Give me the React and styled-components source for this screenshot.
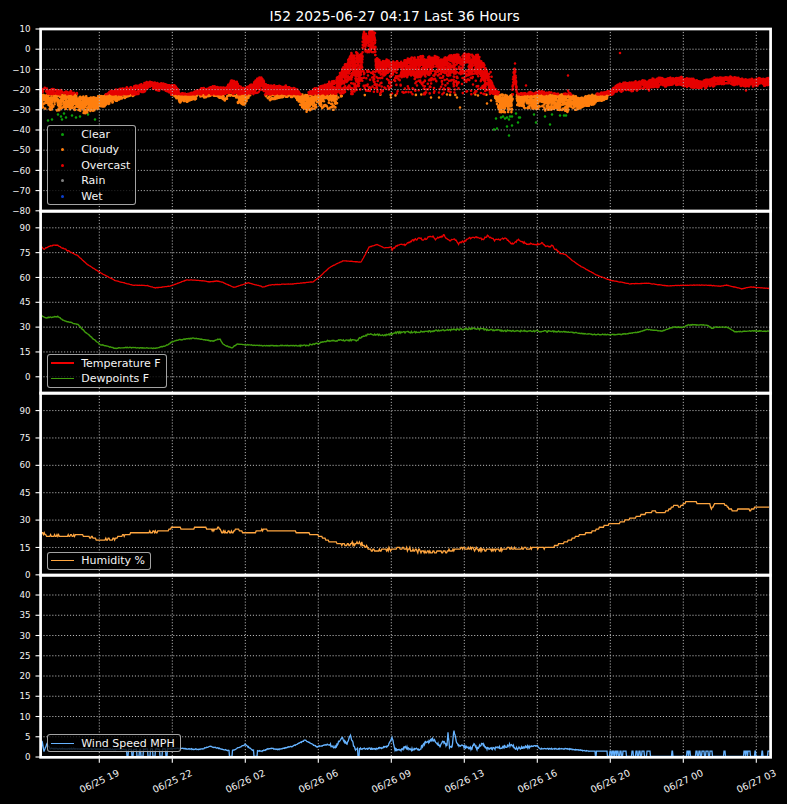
import React from 'react'
import styled, { createGlobalStyle } from 'styled-components'

const FONT = '"DejaVu Sans", "Liberation Sans", sans-serif'
const ROW_H = 182.33
const GRID_X = [99.3, 172.3, 245.3, 318.3, 391.3, 464.3, 537.3, 610.3, 683.3, 756.3]
const X_LABELS = ['06/25 19', '06/25 22', '06/26 02', '06/26 06', '06/26 09', '06/26 13', '06/26 16', '06/26 20', '06/27 00', '06/27 03']

const GlobalStyle = createGlobalStyle`
  html, body {
    margin: 0;
    background: #000;
  }
`

const Figure = styled.div`
  width: 787px;
  height: 804px;
  background: #000;
  color: #fff;
  font-family: ${FONT};
  display: flex;
  flex-direction: column;
  overflow: hidden;
`

const Title = styled.h1`
  margin: 0;
  height: 28.5px;
  padding-left: 2px;
  box-sizing: border-box;
  font-size: 13.8px;
  font-weight: 400;
  line-height: 33px;
  text-align: center;
  white-space: nowrap;
`

const PanelRow = styled.section`
  display: flex;
  height: ${ROW_H}px;
  flex: none;
`

const Gutter = styled.svg`
  display: block;
  width: 40px;
  height: 100%;
  flex: none;
  overflow: visible;
`

const PlotArea = styled.div`
  position: relative;
  width: 732px;
  height: 100%;
  flex: none;
`

const PlotSvg = styled.svg`
  display: block;
  width: 100%;
  height: 100%;
  overflow: visible;
`

const TickText = styled.text`
  font-family: ${FONT};
  font-size: ${(p) => p.$size}px;
  fill: #f2f2f2;
`

const XAxis = styled.svg`
  display: block;
  width: 787px;
  height: 46px;
  flex: none;
  overflow: visible;
`

const Legend = styled.div`
  position: absolute;
  left: 6.7px;
  bottom: 5.4px;
  box-sizing: border-box;
  display: flex;
  flex-direction: column;
  padding: 0.5px 5px 0.5px 3px;
  background: rgba(0, 0, 0, 0.8);
  border: 1px solid rgba(204, 204, 204, 0.8);
  border-radius: 3px;
`

const LegendRow = styled.div`
  display: flex;
  align-items: center;
  gap: 7.5px;
  height: 15.5px;
  font-size: 11px;
  color: #f4f4f4;
  white-space: nowrap;
`

const Swatch = styled.span`
  display: flex;
  align-items: center;
  justify-content: center;
  width: 23px;
  flex: none;
`

const LineKey = styled.span`
  display: block;
  width: 100%;
  height: 1.2px;
  background: ${(p) => p.$color};
`

const DotKey = styled.span`
  display: block;
  width: 3px;
  height: 3px;
  border-radius: 50%;
  background: ${(p) => p.$color};
`

// small seeded random so the noisy traces come out the same each load
function makeRng(seed) {
  let a = seed
  return () => {
    a = (a + 0x6d2b79f5) | 0
    let t = Math.imul(a ^ (a >>> 15), 1 | a)
    t = (t + Math.imul(t ^ (t >>> 7), 61 | t)) ^ t
    return ((t ^ (t >>> 14)) >>> 0) / 4294967296
  }
}

function interp(pts, x, col = 1) {
  if (x <= pts[0][0]) return pts[0][col]
  for (let i = 1; i < pts.length; i++) {
    if (x <= pts[i][0]) {
      const [x0] = pts[i - 1]
      const [x1] = pts[i]
      const f = (x - x0) / (x1 - x0)
      return pts[i - 1][col] + (pts[i][col] - pts[i - 1][col]) * f
    }
  }
  return pts[pts.length - 1][col]
}

function tracePath(pts, seed, noiseAt, quant) {
  const rng = makeRng(seed)
  let d = ''
  for (let x = 41; x <= 769.5; x += 0.8) {
    let y = interp(pts, x) + (rng() - 0.5) * noiseAt(x)
    if (quant) y = Math.round(y / quant) * quant
    d += `${d ? 'L' : 'M'}${x.toFixed(1)} ${y.toFixed(2)}`
  }
  return d
}

const TEMP = [[41, 246], [44, 249], [50, 245.7], [57, 245], [63, 248], [78, 255.7], [87, 264], [100, 272.3], [115, 280.3], [133, 285], [147, 285.3], [155, 287.7], [170, 286], [187, 279.7], [200, 280.3], [210, 281.7], [217, 280.7], [223, 282.3], [234, 287.3], [248, 282.7], [260, 285.7], [263, 287], [270, 284.7], [293, 283.7], [313, 281.7], [318, 278], [330, 267], [343, 260.7], [350, 261], [361, 262], [364, 256.7], [369, 247], [377, 244.3], [384, 247.7], [391, 247], [392, 249.7], [397, 245.7], [405, 244.3], [413, 240], [420, 238.3], [423, 239.7], [432, 235.7], [435, 239], [444, 235], [448, 240.3], [455, 239], [458, 243.7], [467, 240], [472, 236.7], [483, 239], [488, 235.7], [495, 240], [505, 238.3], [513, 244.3], [518, 239.7], [527, 243.7], [537, 244.3], [542, 243], [546, 246.7], [552, 245.7], [560, 253.3], [565, 254], [572, 260], [580, 265.7], [597, 275], [610, 280], [630, 283.7], [647, 283], [667, 285.7], [687, 285], [707, 285], [720, 286], [727, 285], [742, 288.7], [750, 286.7], [769, 288.3]]

const DEW = [[41, 315], [45, 317.7], [58, 316.3], [63, 320], [78, 324.3], [85, 331.7], [100, 344.3], [115, 348], [127, 347.3], [147, 348], [157, 348], [167, 345], [172, 341.7], [177, 340], [193, 338], [203, 339.3], [213, 341], [217, 339.3], [220, 339], [223, 344.3], [232, 347.7], [237, 344], [260, 345.5], [303, 345.5], [318, 343.3], [327, 340.7], [350, 340], [357, 340], [363, 335.7], [370, 334], [387, 335], [397, 332.3], [420, 331.7], [447, 330], [473, 328.3], [490, 329.7], [513, 331], [528, 330.7], [567, 331.7], [593, 334.3], [620, 334.3], [637, 332.3], [647, 329.3], [662, 331], [673, 327], [683, 327], [688, 324.7], [707, 324.7], [712, 328.3], [715, 327], [727, 327], [735, 331.7], [753, 330.7], [769, 331]]

const HUMIDITY = [[41, 532.7], [48, 536], [67, 536], [82, 534.7], [83, 536.7], [92, 537.7], [98, 540.3], [112, 539.7], [120, 536.7], [133, 533], [147, 533], [155, 531.7], [168, 530.7], [172, 527.3], [178, 527.3], [182, 529.3], [193, 529], [195, 527.3], [205, 527.3], [210, 529.7], [215, 530], [219, 527.3], [222, 532.3], [233, 532.3], [237, 528.7], [243, 532.3], [255, 532.3], [265, 529.3], [268, 530.7], [290, 531], [302, 532.7], [317, 534.7], [328, 540.7], [337, 543.3], [343, 545], [362, 543.3], [367, 548.3], [373, 550.3], [387, 550], [399, 548], [420, 551], [430, 552], [445, 551.7], [460, 548.3], [487, 550], [507, 549], [544, 548], [554, 546.7], [567, 541.7], [580, 535], [590, 532.7], [600, 528], [610, 524], [619, 523.3], [630, 519.3], [644, 514.3], [652, 511.7], [664, 512.7], [674, 506], [680, 506.7], [686, 502.3], [695, 502], [697, 503.7], [710, 504], [711, 509], [715, 504], [724, 504], [732, 510.7], [737, 510.7], [739, 509], [749, 509], [750, 510.7], [757, 506.7], [769, 506.7]]

const WIND = [[41, 756], [42, 741], [44, 752], [47, 744], [50, 749], [90, 749.5], [125, 750], [181, 749], [200, 750], [210, 747], [220, 749], [228, 751], [235, 750], [245, 745], [253, 751], [262, 751.7], [270, 748.7], [278, 750], [293, 746.7], [305, 740.7], [317, 747.3], [328, 745], [335, 748], [342, 738], [347, 746], [350, 735.7], [355, 749.3], [377, 749.3], [388, 746.7], [392, 737.7], [395, 750], [400, 750.7], [405, 747.7], [410, 750], [420, 749.3], [425, 743.3], [433, 740], [440, 746.7], [443, 741.7], [447, 746], [448, 731.7], [449.5, 748], [452, 748], [454, 730.7], [457, 745], [463, 746.7], [472, 749.3], [474, 743.3], [477, 749.3], [482, 744], [487, 749.3], [500, 748.3], [512, 745], [515, 749.3], [537, 746], [540, 749.3], [567, 749.3], [590, 751.7]]
const WIND_DROPS = [[127, 128], [132, 133], [137, 139], [141, 143], [148, 150], [153, 155], [160, 162], [166, 167], [229.5, 232], [254, 257], [358, 359]]
const WIND_RIGHT = [[540, 595], [596.5, 607], [610, 611], [612.5, 613.5], [615, 616], [617, 618], [620, 621], [623, 626], [632, 633], [636, 637], [639, 640], [642, 644], [647, 650], [672, 672.7], [687, 688], [689, 690], [696, 697], [699, 700], [702, 704], [706, 708], [710, 712], [724, 725], [744, 745], [746, 747], [748, 750], [755, 755.7], [762, 762.7], [768, 769.5]]

function windPath() {
  const rng = makeRng(91)
  const inside = (list, x) => list.some(([a, b]) => x >= a && x <= b)
  const jitter = (x) => {
    if (x > 330 && x < 356) return 3.2
    if (x > 396 && x < 530) return 2.6
    if (x > 360 && x < 396) return 1.6
    return 0.9
  }
  let d = ''
  for (let x = 41; x <= 769.5; x += 0.5) {
    let y
    if (x >= 590) y = inside(WIND_RIGHT, x) ? 751.7 : 757
    else if (inside(WIND_DROPS, x)) y = 757
    else y = interp(WIND, x) + (rng() - 0.5) * jitter(x)
    d += `${d ? 'L' : 'M'}${x} ${y.toFixed(1)}`
  }
  return d
}

// x, top of the band, bottom of the band (pixels)
const BAND = [[41, 87, 107], [55, 88, 111], [70, 90, 109], [85, 96, 113], [100, 96, 108], [110, 91, 103], [125, 87, 97], [140, 84, 92], [150, 81, 88], [165, 83, 89], [175, 85, 96], [180, 92, 102], [190, 93, 100], [200, 88, 96], [215, 86, 95], [225, 87, 100], [232, 79, 94], [236, 80, 100], [240, 85, 105], [245, 87, 104], [250, 84, 95], [258, 78, 92], [262, 76, 89], [266, 84, 96], [270, 85, 100], [280, 85, 97], [295, 87, 96], [305, 94, 112], [318, 85, 107], [335, 80, 110], [340, 70, 92], [345, 62, 92], [352, 50, 88], [358, 50, 85], [362, 50, 78], [363, 30, 52], [375, 29, 52], [376, 55, 66], [380, 58, 72], [395, 60, 75], [420, 55, 74], [440, 55, 72], [455, 54, 72], [470, 52, 74], [480, 55, 72], [485, 65, 85], [490, 78, 92], [495, 88, 100], [500, 93, 112], [510, 95, 113], [512, 93, 112], [513.5, 70, 84], [515, 62, 84], [516, 75, 88], [517, 92, 108], [530, 92, 108], [545, 90, 110], [560, 93, 110], [570, 92, 112], [580, 97, 108], [590, 95, 105], [600, 92, 100], [610, 90, 96], [620, 83, 90], [630, 82, 90], [640, 80, 88], [660, 78, 85], [680, 76, 84], [700, 80, 87], [710, 78, 85], [730, 76, 83], [745, 79, 86], [769, 77, 83]]

const GREEN_DOTS = [[48, 120], [52, 119], [58, 114], [61, 116], [62, 119], [64, 113], [66, 117], [72, 115], [76, 117], [80, 116], [88, 114], [95, 119], [494, 129], [497, 128], [496, 118], [501, 117], [503, 116], [505, 118], [507, 117], [509, 119], [510, 116], [507, 126], [512, 125], [509, 135], [518, 122], [519, 117], [516, 113], [512, 116], [520, 117], [534, 114], [536, 122], [545, 116], [550, 124], [552, 114], [560, 115], [564, 115], [566, 115]]
const ORANGE_DOTS = [[391, 97], [431, 97], [439, 97], [447, 94], [457, 97], [460, 107], [478, 95], [491, 100], [487, 103]]
const RED_DOTS = [[620, 52.5], [568, 75], [568, 90], [649, 90], [746, 90], [526, 85], [392, 93]]

function scatterPaths() {
  const rng = makeRng(7)
  const red = []
  const orange = []
  const put = (x, y) => {
    const p = `M${x.toFixed(1)} ${Math.max(30, y).toFixed(1)}h.01`
    if (y < 94) red.push(p)
    else orange.push(p)
  }
  let wobble = 0
  for (let col = 41; col <= 768; col += 1.6) {
    // each small column gets its own ragged top and bottom
    const rough = col > 340 && col < 492
    const ragged = col > 340 && col < 362
    const topOff = rng() * rng() * (rough ? 7 : 2)
    const botOff = (rng() - 0.5) * (ragged ? 24 : rough ? 12 : 7)
    for (let x = col; x < col + 1.6; x += 0.2) {
      wobble = wobble * 0.92 + (rng() - 0.5) * 0.6
      const top = interp(BAND, x, 1) + wobble + topOff
      const bot = interp(BAND, x, 2)
      const solid = Math.max(top + 2, top + (bot - top) * 0.72 + botOff)
      put(x, top + rng() * (solid - top))
      put(x, top + rng() * (solid - top))
      if (rng() < 0.3) put(x, solid + rng() * Math.max(0, bot - solid))
    }
  }
  // loose readings under the overcast block
  for (let i = 0; i < 460; i++) {
    const x = 340 + rng() * 152
    const y = 70 + Math.pow(rng(), 1.4) * 25
    put(x, y)
  }
  RED_DOTS.forEach(([x, y]) => red.push(`M${x} ${y}h.01`))
  ORANGE_DOTS.forEach(([x, y]) => orange.push(`M${x} ${y}h.01`))
  return { red: red.join(''), orange: orange.join(''), green: GREEN_DOTS.map(([x, y]) => `M${x} ${y}h.01`).join('') }
}

function Grid({ ys, top }) {
  return (
    <g stroke="#b8b8b8" strokeWidth="1" strokeDasharray="1.1 1.85" fill="none">
      {GRID_X.map((x) => (
        <line key={x} x1={x} x2={x} y1={top} y2={top + ROW_H} />
      ))}
      {ys.map((y) => (
        <line key={y} x1={40.5} x2={770.5} y1={y} y2={y} />
      ))}
    </g>
  )
}

function YTicks({ ticks, top }) {
  return (
    <Gutter viewBox={`0 ${top} 40 ${ROW_H}`}>
      {ticks.map(([label, y]) => (
        <g key={label}>
          <line x1={35.5} x2={40} y1={y} y2={y} stroke="#fff" strokeWidth="1.1" />
          <TickText $size={8.7} x={30.5} y={y} dy="0.36em" textAnchor="end">{label}</TickText>
        </g>
      ))}
    </Gutter>
  )
}

function Panel({ top, ticks, legend, points, children }) {
  const ys = ticks.map((t) => t[1])
  return (
    <PanelRow>
      <YTicks ticks={ticks} top={top} />
      <PlotArea>
        <PlotSvg viewBox={`40 ${top} 732 ${ROW_H}`} preserveAspectRatio="none">
          {points}
          <Grid ys={ys} top={top} />
          {children}
          <rect x={40.6} y={top} width={730} height={ROW_H} fill="none" stroke="#fff" strokeWidth="2.7" />
        </PlotSvg>
        <Legend>
          {legend.map((item) => (
            <LegendRow key={item.label}>
              <Swatch>
                {item.dot ? <DotKey $color={item.color} /> : <LineKey $color={item.color} />}
              </Swatch>
              {item.label}
            </LegendRow>
          ))}
        </Legend>
      </PlotArea>
    </PanelRow>
  )
}

const ticksFor = (values, zero, scale) => values.map((v) => [`${v < 0 ? '\u2212' : ''}${Math.abs(v)}`, zero - v * scale])

const COLORS = {
  green: '#0aa00a',
  orange: '#ff7f0e',
  red: '#e60000',
  temp: '#f00000',
  dew: '#3f9c0c',
  humidity: '#ffa640',
  wind: '#66b3ff',
}

const scatter = scatterPaths()
const tempNoise = (x) => (x > 390 && x < 560 ? 2 : x < 70 ? 1 : 0.35)
const dewNoise = (x) => (x > 300 && x < 560 ? 1.6 : 0.7)
const humidityNoise = (x) => (x > 340 && x < 545 ? 3 : x < 240 ? 1.4 : 0.5)

function App() {
  return (
    <Figure>
      <GlobalStyle />
      <Title>I52 2025-06-27 04:17 Last 36 Hours</Title>

      <Panel
        top={28.5}
        ticks={ticksFor([10, 0, -10, -20, -30, -40, -50, -60, -70, -80], 48.7, 2.02)}
        legend={[
          { label: 'Clear', color: COLORS.green, dot: true },
          { label: 'Cloudy', color: COLORS.orange, dot: true },
          { label: 'Overcast', color: COLORS.red, dot: true },
          { label: 'Rain', color: '#808080', dot: true },
          { label: 'Wet', color: '#0b3fd0', dot: true },
        ]}
        points={
          <g fill="none" strokeLinecap="round" strokeWidth="2.6">
            <path d={scatter.green} stroke={COLORS.green} />
            <path d={scatter.orange} stroke={COLORS.orange} />
            <path d={scatter.red} stroke={COLORS.red} />
          </g>
        }
      />

      <Panel
        top={210.83}
        ticks={ticksFor([90, 75, 60, 45, 30, 15, 0], 376.6, 1.655)}
        legend={[
          { label: 'Temperature F', color: COLORS.temp },
          { label: 'Dewpoints F', color: COLORS.dew },
        ]}
      >
        <path d={tracePath(TEMP, 11, tempNoise)} fill="none" stroke={COLORS.temp} strokeWidth="1.3" />
        <path d={tracePath(DEW, 23, dewNoise)} fill="none" stroke={COLORS.dew} strokeWidth="1.4" />
      </Panel>

      <Panel
        top={393.16}
        ticks={ticksFor([90, 75, 60, 45, 30, 15, 0], 575, 1.825)}
        legend={[{ label: 'Humidity %', color: COLORS.humidity }]}
      >
        <path d={tracePath(HUMIDITY, 37, humidityNoise, 1.825)} fill="none" stroke={COLORS.humidity} strokeWidth="1.3" />
      </Panel>

      <Panel
        top={575.49}
        ticks={ticksFor([40, 35, 30, 25, 20, 15, 10, 5, 0], 757.5, 4.05)}
        legend={[{ label: 'Wind Speed MPH', color: COLORS.wind }]}
      >
        <path d={windPath()} fill="none" stroke={COLORS.wind} strokeWidth="1.3" />
      </Panel>

      <XAxis viewBox="0 757.8 787 46">
        {GRID_X.map((x, i) => (
          <g key={x}>
            <line x1={x} x2={x} y1={758} y2={762.5} stroke="#fff" strokeWidth="1.1" />
            <TickText $size={9.5} x={x} y={781} dy="0.36em" textAnchor="middle" transform={`rotate(-25 ${x} 781)`}>
              {X_LABELS[i]}
            </TickText>
          </g>
        ))}
      </XAxis>
    </Figure>
  )
}

export default App
